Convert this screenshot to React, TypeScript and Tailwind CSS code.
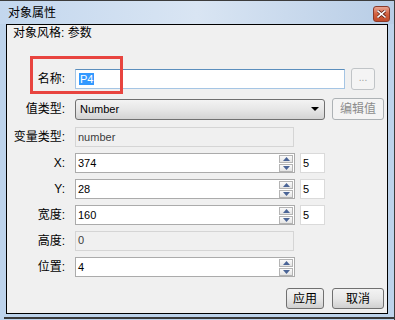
import React from "react";

const FONT = "font-['Liberation_Sans','Noto_Sans_CJK_SC',sans-serif]";

function Spin() {
  return (
    <div className="ml-auto mr-[1px] flex flex-col gap-[1px]">
      <div className="w-[14px] h-[8px] border border-[#b4b4b4] bg-gradient-to-b from-[#fbfbfb] to-[#e4e4e4] flex items-center justify-center">
        <svg width="7" height="4" viewBox="0 0 7 4"><path d="M0 4 L3.5 0 L7 4 Z" fill="#4a6496" /></svg>
      </div>
      <div className="w-[14px] h-[8px] border border-[#b4b4b4] bg-gradient-to-b from-[#fbfbfb] to-[#e4e4e4] flex items-center justify-center">
        <svg width="7" height="4" viewBox="0 0 7 4"><path d="M0 0 L3.5 4 L7 0 Z" fill="#4a6496" /></svg>
      </div>
    </div>
  );
}

function Row({ label, mt, h = "h-[20px]", children }: { label: string; mt: string; h?: string; children: React.ReactNode }) {
  return (
    <div className={`flex items-center ${h} ${mt}`}>
      <span className="w-[58px] text-right text-[12px] text-black whitespace-nowrap">{label}</span>
      <div className="ml-[10px] flex items-center">{children}</div>
    </div>
  );
}

function SpinBox({ value, step }: { value: string; step?: string }) {
  return (
    <>
      <div className="w-[220px] h-[20px] border border-[#ababab] bg-white flex items-center pl-[2px] text-[11px] text-black">
        <span>{value}</span>
        <Spin />
      </div>
      {step && (
        <div className="ml-[5px] w-[25px] h-[20px] border border-[#dadada] bg-white flex items-center pl-[2px] text-[11px] text-black">
          {step}
        </div>
      )}
    </>
  );
}

function ReadOnly({ value }: { value: string }) {
  return (
    <div className="w-[219px] h-[20px] border border-[#d5d5d5] bg-[#f0f0f0] flex items-center pl-[2px] text-[11px] text-[#3c3c3c]">
      {value}
    </div>
  );
}

export default function App() {
  return (
    <div className={`relative w-[395px] h-[320px] overflow-hidden bg-[#bdd3eb] border-t border-r border-[#3c3c3c] ${FONT}`}>
      {/* title bar */}
      <div className="h-[23px] flex items-center pl-[8px] pr-[4px] bg-gradient-to-r from-[#c3d7ee] via-[#d9e5f3] to-[#b8cde6]">
        <span className="text-[12px] text-black leading-none">对象属性</span>
        <div className="ml-auto mt-[3px] w-[17px] h-[16px] rounded-[3px] border border-[#8a3a2a] bg-gradient-to-b from-[#e9a391] via-[#d2613f] to-[#c04a2a] flex items-center justify-center">
          <svg width="9" height="8" viewBox="0 0 9 8">
            <path d="M1 1 L8 7 M8 1 L1 7" stroke="#5a1a10" strokeWidth="3" strokeLinecap="square" />
            <path d="M1 1 L8 7 M8 1 L1 7" stroke="#ffffff" strokeWidth="1.6" strokeLinecap="square" />
          </svg>
        </div>
      </div>

      {/* client area */}
      <div className="ml-[6px] w-[382px] h-[290px] border border-black bg-[#f0f0f0] flex flex-col">
        <div className="pl-[6px] leading-[16px] text-[12px] text-black">对象风格: 参数</div>

        <Row label="名称:" mt="mt-[28px]">
          <div className="w-[270px] h-[20px] border border-[#a5c5e4] border-t-[#5b8ebd] bg-white flex items-center pl-[3px] text-[11px]">
            <span className="bg-[#3399ff] text-white px-[1px] leading-[12px]">P4</span>
          </div>
          <div className="ml-[6px] w-[24px] h-[22px] rounded-[3px] border border-[#c0c4c7] bg-[#f4f4f4] flex items-center justify-center text-[10px] text-[#a0a0a0] leading-none pb-[2px]">
            ...
          </div>
        </Row>

        <Row label="值类型:" mt="mt-[9px]" h="h-[22px]">
          <div className="w-[250px] h-[21px] rounded-[3px] border border-[#707070] bg-gradient-to-b from-[#f3f3f3] via-[#e6e6e6] to-[#d3d3d3] flex items-center pl-[4px] pr-[5px] text-[11px] text-black">
            <span>Number</span>
            <svg className="ml-auto" width="8" height="4" viewBox="0 0 8 4"><path d="M0 0 L8 0 L4 4 Z" fill="#000" /></svg>
          </div>
          <div className="ml-[7px] w-[52px] h-[22px] rounded-[3px] border border-[#adb2b5] bg-[#f4f4f4] flex items-center justify-center text-[12px] text-[#8d8d8d]">
            编辑值
          </div>
        </Row>

        <Row label="变量类型:" mt="mt-[7px]">
          <ReadOnly value="number" />
        </Row>

        <Row label="X:" mt="mt-[6px]">
          <SpinBox value="374" step="5" />
        </Row>

        <Row label="Y:" mt="mt-[6px]">
          <SpinBox value="28" step="5" />
        </Row>

        <Row label="宽度:" mt="mt-[6px]">
          <SpinBox value="160" step="5" />
        </Row>

        <Row label="高度:" mt="mt-[6px]" h="h-[19px]">
          <ReadOnly value="0" />
        </Row>

        <Row label="位置:" mt="mt-[7px]">
          <SpinBox value="4" />
        </Row>

        <div className="mt-[11px] flex justify-end gap-[8px] pr-[3px]">
          <div className="w-[38px] h-[21px] rounded-[3px] border border-[#707070] bg-gradient-to-b from-[#f3f3f3] via-[#e8e8e8] to-[#d0d0d0] flex items-center justify-center text-[12px] text-black">
            应用
          </div>
          <div className="w-[52px] h-[21px] rounded-[3px] border border-[#707070] bg-gradient-to-b from-[#f3f3f3] via-[#e8e8e8] to-[#d0d0d0] flex items-center justify-center text-[12px] text-black">
            取消
          </div>
        </div>
      </div>

      <div className="mt-[3px] ml-[4px] h-[2px] bg-[#3a3a3a]" />

      {/* red annotation box over the name field */}
      <div className="absolute left-[30px] top-[55px] w-[93px] h-[38px] border-[3px] border-[#e8443f]" />
    </div>
  );
}
